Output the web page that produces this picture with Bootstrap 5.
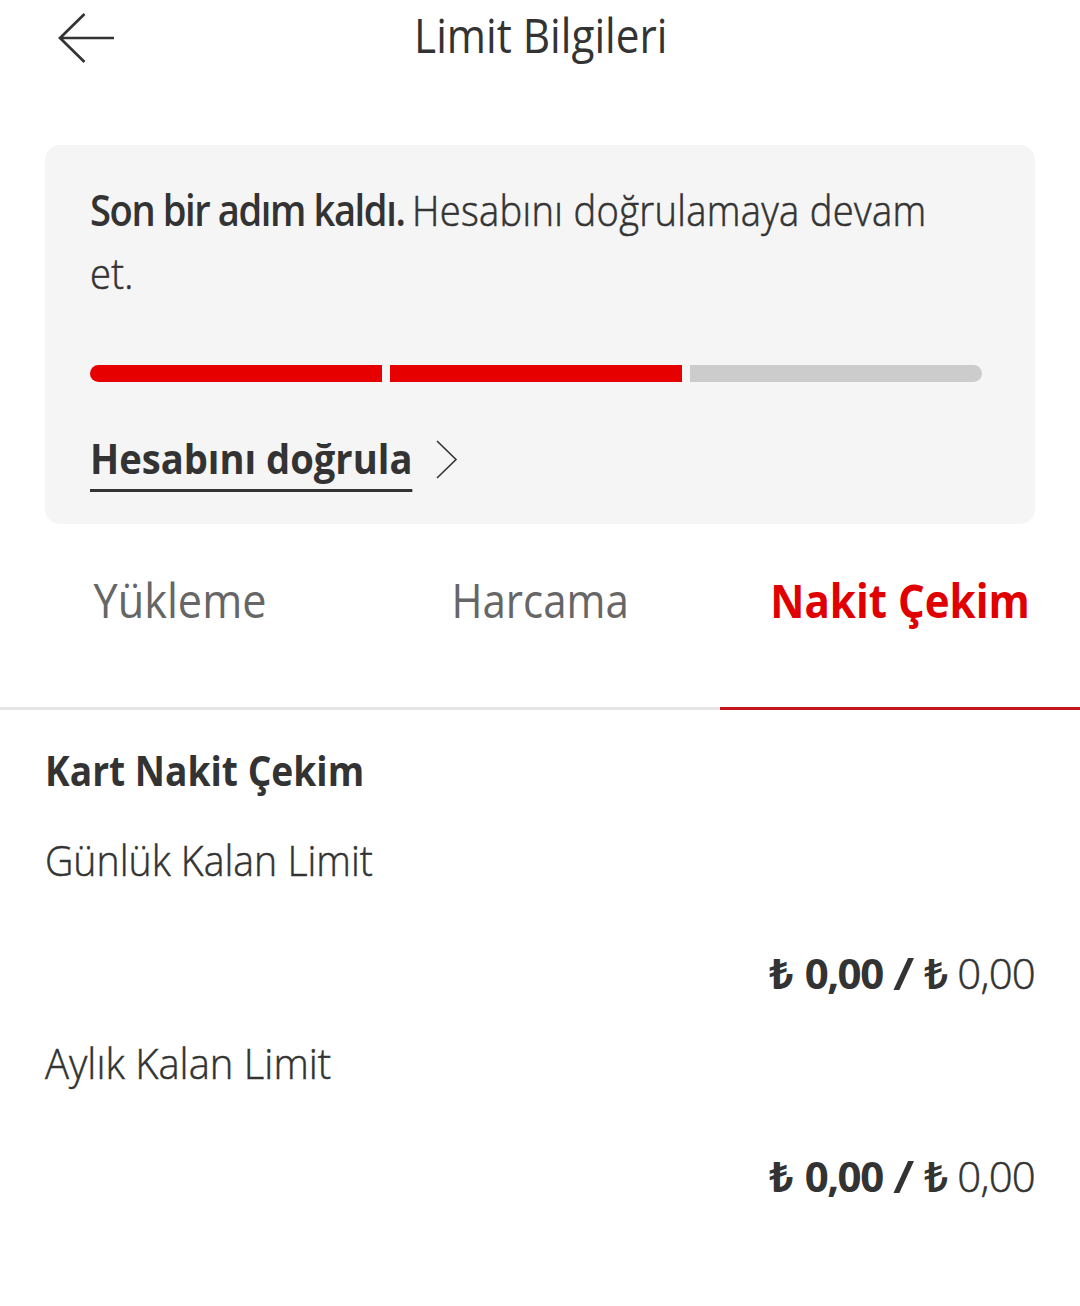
<!DOCTYPE html>
<html lang="tr">
<head>
<meta charset="utf-8">
<meta name="viewport" content="width=device-width, initial-scale=1">
<title>Limit Bilgileri</title>
<link href="https://cdn.jsdelivr.net/npm/bootstrap@5.3.0/dist/css/bootstrap.min.css" rel="stylesheet">
<style>
body{font-family:"Open Sans","Noto Sans",sans-serif;color:#333;background:#fff;overflow-x:hidden}
.narrow{display:inline-block;transform:scaleX(var(--sx,.91));transform-origin:var(--ox,left) center;white-space:nowrap}
.app-head{height:145px}
.app-head h1{font-size:47px;line-height:70px;font-weight:400}
.app-head .narrow{--sx:.9;--ox:center;margin-left:2px}
.back-icon{top:12px;left:58px}
.verify{margin:0 45px;height:379px;padding:33px 45px 0;border:0;border-radius:15px;background:#f5f5f5;color:#333}
.verify p{font-size:43px;line-height:63px;font-weight:300;letter-spacing:.35px;-webkit-text-stroke:.6px #333;width:960px;transform:scaleX(.887);transform-origin:left}
.verify p b{font-weight:600;letter-spacing:-1.6px;margin-right:-3px;-webkit-text-stroke:0}
.steps{gap:8px;margin-top:61px;height:17px}
.steps div{width:292px;background:#e60000}
.steps div:first-child{border-radius:9px 0 0 9px}
.steps div:last-child{border-radius:0 9px 9px 0;background:#ccc}
.verify-link{margin-top:44px}
.verify-link a{font-size:42px;line-height:63px;font-weight:700;color:#333;border-bottom:3px solid #333;--sx:.908;margin-right:-10px}
.verify-link svg{margin-top:14px}
.limit-tabs .nav-link{padding:44px 0 75px;font-size:47px;line-height:64px;font-weight:400;color:#666;border-bottom:3px solid #e6e6e6;border-radius:0}
.limit-tabs .nav-link.active{color:#e00000;font-weight:700;border-color:#c4161c}
.limit-tabs .narrow{--ox:center;--sx:.895}
.limit-tabs .load{--sx:.92}
.limits{padding:30px 45px 0}
.limits h2{font-size:42px;line-height:60px;font-weight:700;margin:0}
.limits h2 .narrow{--sx:.885}
.limit-name{font-size:43px;line-height:60px;font-weight:300;margin-top:30px;-webkit-text-stroke:.5px #333}
.limit-name .narrow{--sx:.912}
.limit-name .monthly{--sx:.93}
.amount{font-size:42px;line-height:60px;margin-top:53px;font-weight:700}
.cur{margin-right:11px}
.used{letter-spacing:-1.5px;margin-right:12px}
.sep{font-size:45px;font-weight:600;transform:scaleX(1.22);margin-right:12px}
.cur2{font-weight:600;margin-right:9px}
.total{font-weight:300;letter-spacing:-.8px;-webkit-text-stroke:.5px #333}
</style>
</head>
<body>
<header class="app-head position-relative">
<svg class="back-icon position-absolute" width="57" height="52" viewBox="0 0 57 52" fill="none" stroke="#333" stroke-width="2.7"><path d="M26.500 2L2 26L26.500 50M2 26H56"/></svg>
<h1 class="text-center m-0"><span class="narrow">Limit Bilgileri</span></h1>
</header>
<main>
<section class="card verify">
<p class="mb-0"><b>Son bir adım kaldı.</b> Hesabını doğrulamaya devam et.</p>
<div class="steps d-flex"><div></div><div></div><div></div></div>
<div class="verify-link d-flex align-items-start"><a href="#" class="narrow text-decoration-none">Hesabını doğrula</a>
<svg width="24" height="40" viewBox="0 0 24 40" fill="none" stroke="#333" stroke-width="1.6"><path d="M2 1L21 19.500L2 38"/></svg></div>
</section>
<nav class="nav limit-tabs row g-0 text-center">
<a class="nav-link col-4" href="#"><span class="narrow load">Yükleme</span></a>
<a class="nav-link col-4" href="#"><span class="narrow">Harcama</span></a>
<a class="nav-link col-4 active" href="#"><span class="narrow">Nakit Çekim</span></a>
</nav>
<section class="limits">
<h2><span class="narrow">Kart Nakit Çekim</span></h2>
<div class="limit-name"><span class="narrow">Günlük Kalan Limit</span></div>
<div class="amount d-flex justify-content-end"><span class="cur">₺</span><span class="used">0,00</span><span class="sep">/</span><span class="cur2">₺</span><span class="total">0,00</span></div>
<div class="limit-name"><span class="narrow monthly">Aylık Kalan Limit</span></div>
<div class="amount d-flex justify-content-end"><span class="cur">₺</span><span class="used">0,00</span><span class="sep">/</span><span class="cur2">₺</span><span class="total">0,00</span></div>
</section>
</main>
<script src="https://cdn.jsdelivr.net/npm/bootstrap@5.3.0/dist/js/bootstrap.bundle.min.js"></script>
</body>
</html>
